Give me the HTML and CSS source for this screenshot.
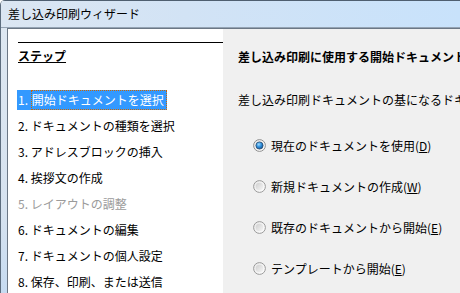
FILE: index.html
```html
<!DOCTYPE html>
<html lang="ja">
<head>
<meta charset="utf-8">
<title>差し込み印刷ウィザード</title>
<link rel="stylesheet" href="styles.css">
</head>
<body>
<svg class="defs" width="0" height="0" aria-hidden="true">
  <defs>
    <linearGradient id="rbg" x1="0" y1="0" x2="1" y2="1">
      <stop offset="0" stop-color="#e6e6e6"/>
      <stop offset="1" stop-color="#ffffff"/>
    </linearGradient>
    <linearGradient id="rin" x1="0" y1="0" x2="1" y2="1">
      <stop offset="0" stop-color="#cfcfcf"/>
      <stop offset="1" stop-color="#f6f6f6"/>
    </linearGradient>
    <radialGradient id="rdot" cx="0.4" cy="0.35" r="0.7">
      <stop offset="0" stop-color="#9fdcff"/>
      <stop offset="0.5" stop-color="#2f8fdc"/>
      <stop offset="1" stop-color="#14508f"/>
    </radialGradient>
  </defs>
</svg>
<div class="window">
  <div class="titlebar">差し込み印刷ウィザード</div>
  <div class="body">
    <div class="frame"></div>
    <div class="content">
      <nav class="steps">
        <div class="rule"></div>
        <div class="steps-title">ステップ</div>
        <ul class="step-list">
          <li class="step"><span class="hl">1. <span class="focus">開始ドキュメントを選択</span></span></li>
          <li class="step">2. ドキュメントの種類を選択</li>
          <li class="step">3. アドレスブロックの挿入</li>
          <li class="step">4. 挨拶文の作成</li>
          <li class="step disabled">5. レイアウトの調整</li>
          <li class="step">6. ドキュメントの編集</li>
          <li class="step">7. ドキュメントの個人設定</li>
          <li class="step">8. 保存、印刷、または送信</li>
        </ul>
      </nav>
      <main class="page">
        <h1 class="heading">差し込み印刷に使用する開始ドキュメントを選択してください</h1>
        <p class="desc">差し込み印刷ドキュメントの基になるドキュメントを選択してください。</p>
        <div class="options">
          <label class="option">
            <svg class="radio" width="13" height="13" viewBox="0 0 13 13"><circle cx="6.5" cy="6.5" r="5.9" fill="url(#rbg)" stroke="#8e8e8e" stroke-width="1"/><circle cx="6.5" cy="6.5" r="3.6" fill="url(#rdot)" stroke="#2b4c70" stroke-width="0.8"/></svg>
            <span>現在のドキュメントを使用(<u>D</u>)</span>
          </label>
          <label class="option">
            <svg class="radio" width="13" height="13" viewBox="0 0 13 13"><circle cx="6.5" cy="6.5" r="5.9" fill="url(#rbg)" stroke="#9a9a9a" stroke-width="1"/><circle cx="6.5" cy="6.5" r="3.8" fill="url(#rin)"/></svg>
            <span>新規ドキュメントの作成(<u>W</u>)</span>
          </label>
          <label class="option">
            <svg class="radio" width="13" height="13" viewBox="0 0 13 13"><circle cx="6.5" cy="6.5" r="5.9" fill="url(#rbg)" stroke="#9a9a9a" stroke-width="1"/><circle cx="6.5" cy="6.5" r="3.8" fill="url(#rin)"/></svg>
            <span>既存のドキュメントから開始(<u>E</u>)</span>
          </label>
          <label class="option">
            <svg class="radio" width="13" height="13" viewBox="0 0 13 13"><circle cx="6.5" cy="6.5" r="5.9" fill="url(#rbg)" stroke="#9a9a9a" stroke-width="1"/><circle cx="6.5" cy="6.5" r="3.8" fill="url(#rin)"/></svg>
            <span>テンプレートから開始(<u>E</u>)</span>
          </label>
        </div>
      </main>
    </div>
  </div>
</div>
</body>
</html>
```

FILE: styles.css
```css
html, body {
  margin: 0;
  padding: 0;
  background: #ffffff;
}

body {
  width: 460px;
  height: 293px;
  overflow: hidden;
  font-family: "Noto Sans CJK JP", "Noto Sans", sans-serif;
  font-size: 12px;
  color: #000000;
}

.defs {
  position: absolute;
  width: 0;
  height: 0;
}

.window {
  display: flex;
  flex-direction: column;
  height: 293px;
  border-left: 1px solid #5d6d7e;
  border-top-left-radius: 5px;
  overflow: hidden;
  box-sizing: border-box;
}

.titlebar {
  flex: none;
  height: 26px;
  line-height: 26px;
  padding-left: 7px;
  border-top: 1px solid #4f5f70;
  border-bottom: 1px solid #94a3b3;
  background: linear-gradient(to right, #dbe6f2 0%, #d2e3f5 40%, #c8e2fb 100%);
  white-space: nowrap;
}

.body {
  flex: 1;
  display: flex;
  min-height: 0;
}

.frame {
  width: 6px;
  flex: none;
  background: linear-gradient(to bottom, #dde7f1 0%, #d6e2ef 70%, #c6dbf1 100%);
}

.content {
  flex: 1;
  display: flex;
  min-width: 0;
  border-left: 1px solid #6b7785;
  border-top: 1px solid #6b7785;
}

.steps {
  width: 215px;
  flex: none;
  box-sizing: border-box;
  padding-left: 10px;
  background: #ffffff;
}

.rule {
  height: 1px;
  margin-top: 13px;
  background: #000000;
}

.steps-title {
  margin-top: 5px;
  line-height: 16px;
  font-weight: bold;
  text-decoration: underline;
}

.step-list {
  list-style: none;
  margin: 26px 0 0;
  padding: 0;
  display: flex;
  flex-direction: column;
  gap: 6px;
}

.step {
  height: 20px;
  line-height: 20px;
  white-space: nowrap;
}

.step.disabled {
  color: #9b9b9b;
}

.hl {
  display: inline-block;
  height: 20px;
  vertical-align: top;
  margin-left: -1px;
  padding-left: 1px;
  background: #3399ff;
  color: #ffffff;
}

.focus {
  display: inline-block;
  box-sizing: border-box;
  height: 20px;
  line-height: 18px;
  vertical-align: top;
  padding-right: 2px;
  border: 1px dotted #cc6600;
}

.page {
  flex: 1;
  min-width: 0;
  overflow: hidden;
  padding-left: 15px;
  background: #f0f0f0;
}

.heading {
  margin: 20px 0 0;
  font-size: 12px;
  font-weight: bold;
  line-height: 16px;
  white-space: nowrap;
}

.desc {
  margin: 27px 0 0;
  line-height: 16px;
  white-space: nowrap;
}

.options {
  margin-top: 27px;
  padding-left: 15px;
  display: flex;
  flex-direction: column;
  gap: 21px;
}

.option {
  display: flex;
  align-items: center;
  gap: 5px;
  height: 20px;
  white-space: nowrap;
}

.radio {
  flex: none;
  display: block;
}
```
